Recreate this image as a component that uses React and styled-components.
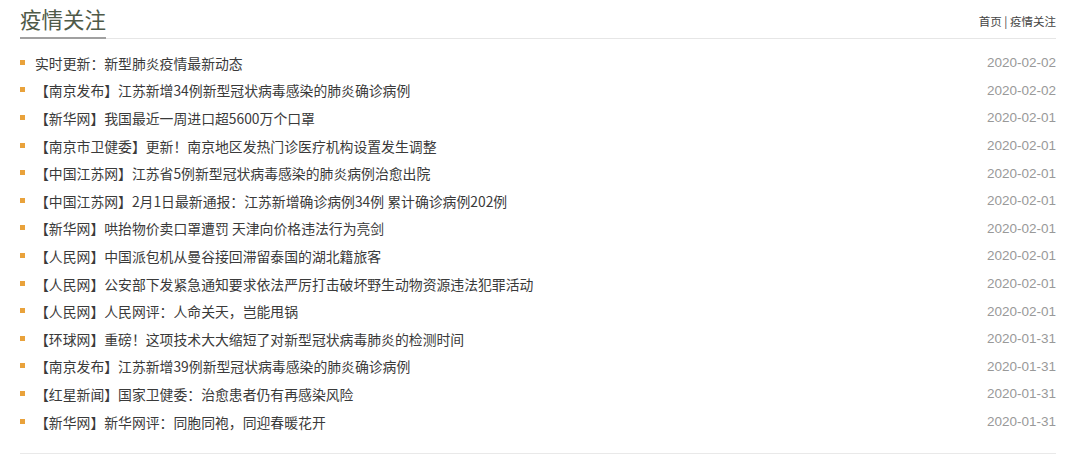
import React from 'react';
import styled, { createGlobalStyle } from 'styled-components';

const GlobalStyle = createGlobalStyle`
    body {
        margin: 0;
        background: #fff;
        font-family: "Microsoft YaHei", "Noto Sans CJK SC", sans-serif;
    }
`;

const Wrap = styled.div`
    padding: 0 24px 0 20px;
`;

const Header = styled.div`
    display: flex;
    justify-content: space-between;
    align-items: flex-end;
    height: 38px;
    border-bottom: 1px solid #e6e6e6;
`;

const Title = styled.h2`
    margin: 0 0 -1px 0;
    padding: 0 0 1px 0;
    font-size: 21.5px;
    font-weight: normal;
    line-height: 34px;
    color: #4f5a48;
    border-bottom: 2px solid #a0a0a0;
    font-family: "Noto Sans CJK SC", sans-serif;
`;

const Crumb = styled.div`
    align-self: center;
    margin-top: 4px;
    font-size: 11.5px;
    color: #444;
    font-family: "Noto Sans CJK SC", sans-serif;
`;

const List = styled.ul`
    list-style: none;
    margin: 0;
    padding: 10px 0 18px;
    border-bottom: 1px solid #e9e9e9;
`;

const Item = styled.li`
    display: flex;
    justify-content: space-between;
    align-items: center;
    height: 27.6px;
    position: relative;
    padding-left: 15px;

    &::before {
        content: '';
        position: absolute;
        left: 0;
        top: 50%;
        width: 5px;
        height: 5px;
        margin-top: -3px;
        background: #e9a23b;
    }
`;

const Link = styled.a`
    font-size: 13.85px;
    color: #3a3a3a;
    text-decoration: none;
    font-family: "Noto Sans CJK SC", sans-serif;
`;

const Date = styled.span`
    font-size: 13.5px;
    color: #999;
    font-family: "Liberation Sans", Arial, sans-serif;
`;

const news = [
    ['实时更新：新型肺炎疫情最新动态', '2020-02-02'],
    ['【南京发布】江苏新增34例新型冠状病毒感染的肺炎确诊病例', '2020-02-02'],
    ['【新华网】我国最近一周进口超5600万个口罩', '2020-02-01'],
    ['【南京市卫健委】更新！南京地区发热门诊医疗机构设置发生调整', '2020-02-01'],
    ['【中国江苏网】江苏省5例新型冠状病毒感染的肺炎病例治愈出院', '2020-02-01'],
    ['【中国江苏网】2月1日最新通报：江苏新增确诊病例34例 累计确诊病例202例', '2020-02-01'],
    ['【新华网】哄抬物价卖口罩遭罚 天津向价格违法行为亮剑', '2020-02-01'],
    ['【人民网】中国派包机从曼谷接回滞留泰国的湖北籍旅客', '2020-02-01'],
    ['【人民网】公安部下发紧急通知要求依法严厉打击破坏野生动物资源违法犯罪活动', '2020-02-01'],
    ['【人民网】人民网评：人命关天，岂能甩锅', '2020-02-01'],
    ['【环球网】重磅！这项技术大大缩短了对新型冠状病毒肺炎的检测时间', '2020-01-31'],
    ['【南京发布】江苏新增39例新型冠状病毒感染的肺炎确诊病例', '2020-01-31'],
    ['【红星新闻】国家卫健委：治愈患者仍有再感染风险', '2020-01-31'],
    ['【新华网】新华网评：同胞同袍，同迎春暖花开', '2020-01-31'],
];

const App = () => {
    return (
        <Wrap>
            <GlobalStyle />
            <Header>
                <Title>疫情关注</Title>
                <Crumb>首页 | 疫情关注</Crumb>
            </Header>
            <List>
                {news.map((item, index) => (
                    <Item key={`news-${index}`}>
                        <Link href="#">{item[0]}</Link>
                        <Date>{item[1]}</Date>
                    </Item>
                ))}
            </List>
        </Wrap>
    );
};

export default App;
